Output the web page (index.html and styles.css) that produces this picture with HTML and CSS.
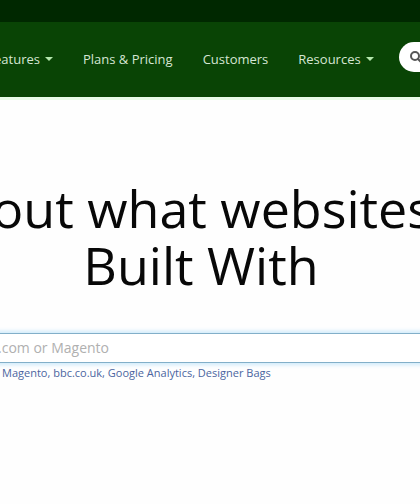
FILE: index.html
```html
<!DOCTYPE html>
<html lang="en">
<head>
    <meta charset="UTF-8">
    <meta name="viewport" content="width=device-width, initial-scale=1">
    <title>Built With</title>
    <link rel="stylesheet" href="styles.css">
</head>
<body>
    <header>
        <div class="top-bar"></div>
        <div class="nav-bar">
            <nav class="nav">
                <a href="#features">eatures <span class="caret"></span></a>
                <a href="#plans">Plans &amp; Pricing</a>
                <a href="#customers">Customers</a>
                <a href="#resources">Resources <span class="caret"></span></a>
            </nav>
            <button class="search-button" type="button" aria-label="Search">
                <svg width="14" height="14" viewBox="0 0 14 14" fill="none" stroke="#555" stroke-width="2">
                    <circle cx="6" cy="6" r="4"/>
                    <path d="M9 9l4 4" stroke-linecap="round"/>
                </svg>
            </button>
        </div>
    </header>

    <main>
        <h1><span class="line">out what websites</span> <span class="line centered">Built With</span></h1>
        <form class="lookup">
            <input class="lookup-input" type="text" placeholder=".com or Magento" aria-label="Website or technology">
        </form>
        <p class="examples">
            <a href="#magento">Magento</a>, <a href="#bbc">bbc.co.uk</a>, <a href="#analytics">Google Analytics</a>, <a href="#bags">Designer Bags</a>
        </p>
    </main>
</body>
</html>
```
FILE: styles.css
```css
* {
    box-sizing: border-box;
}
body {
    margin: 0;
    font-family: "Open Sans", "Liberation Sans", sans-serif;
    font-size: 13px;
    color: #080808;
    background-color: #fefefe;
    overflow-x: hidden;
}
.top-bar {
    height: 22px;
    background-color: #002800;
}
.nav-bar {
    display: flex;
    align-items: flex-start;
    padding: 20px 0 25px;
    background-color: #094405;
    overflow: hidden;
}
.nav {
    display: flex;
    gap: 30px;
    margin-left: -6px;
}
.nav a {
    display: flex;
    align-items: center;
    height: 30px;
    padding-top: 3px;
    color: #d5e6d3;
    text-decoration: none;
    white-space: nowrap;
}
.caret {
    margin-left: 5px;
    border-top: 4px solid #b5e8ae;
    border-left: 4px solid transparent;
    border-right: 4px solid transparent;
}
.search-button {
    display: flex;
    flex: none;
    align-items: center;
    width: 160px;
    height: 30px;
    margin-left: 25px;
    padding: 0 10px;
    border: 0;
    border-radius: 15px;
    background-color: #fff;
    cursor: pointer;
}
main {
    padding-top: 79px;
    border-top: 3px solid #e9fce9;
}
h1 {
    margin: 0;
    font-size: 52px;
    font-weight: 400;
    line-height: 57px;
    white-space: nowrap;
}
.line {
    display: block;
    margin-left: -8px;
}
.centered {
    margin-right: 10px;
    text-align: center;
}
.lookup {
    margin: 40px -8px 0;
}
.lookup-input {
    display: block;
    width: 100%;
    height: 30px;
    padding: 0 5px 2px;
    border: 1px solid #82afc9;
    background-color: #fff;
    box-shadow: 0 0 4px 2px #cfeafa;
    font-family: inherit;
    font-size: 14px;
    outline: none;
}
.lookup-input::placeholder {
    color: #b0b0b0;
}
.examples {
    margin: 1px 0 0 2px;
    font-size: 11px;
    line-height: 18px;
    color: #4b65a0;
}
.examples a {
    color: inherit;
    text-decoration: none;
}
```
